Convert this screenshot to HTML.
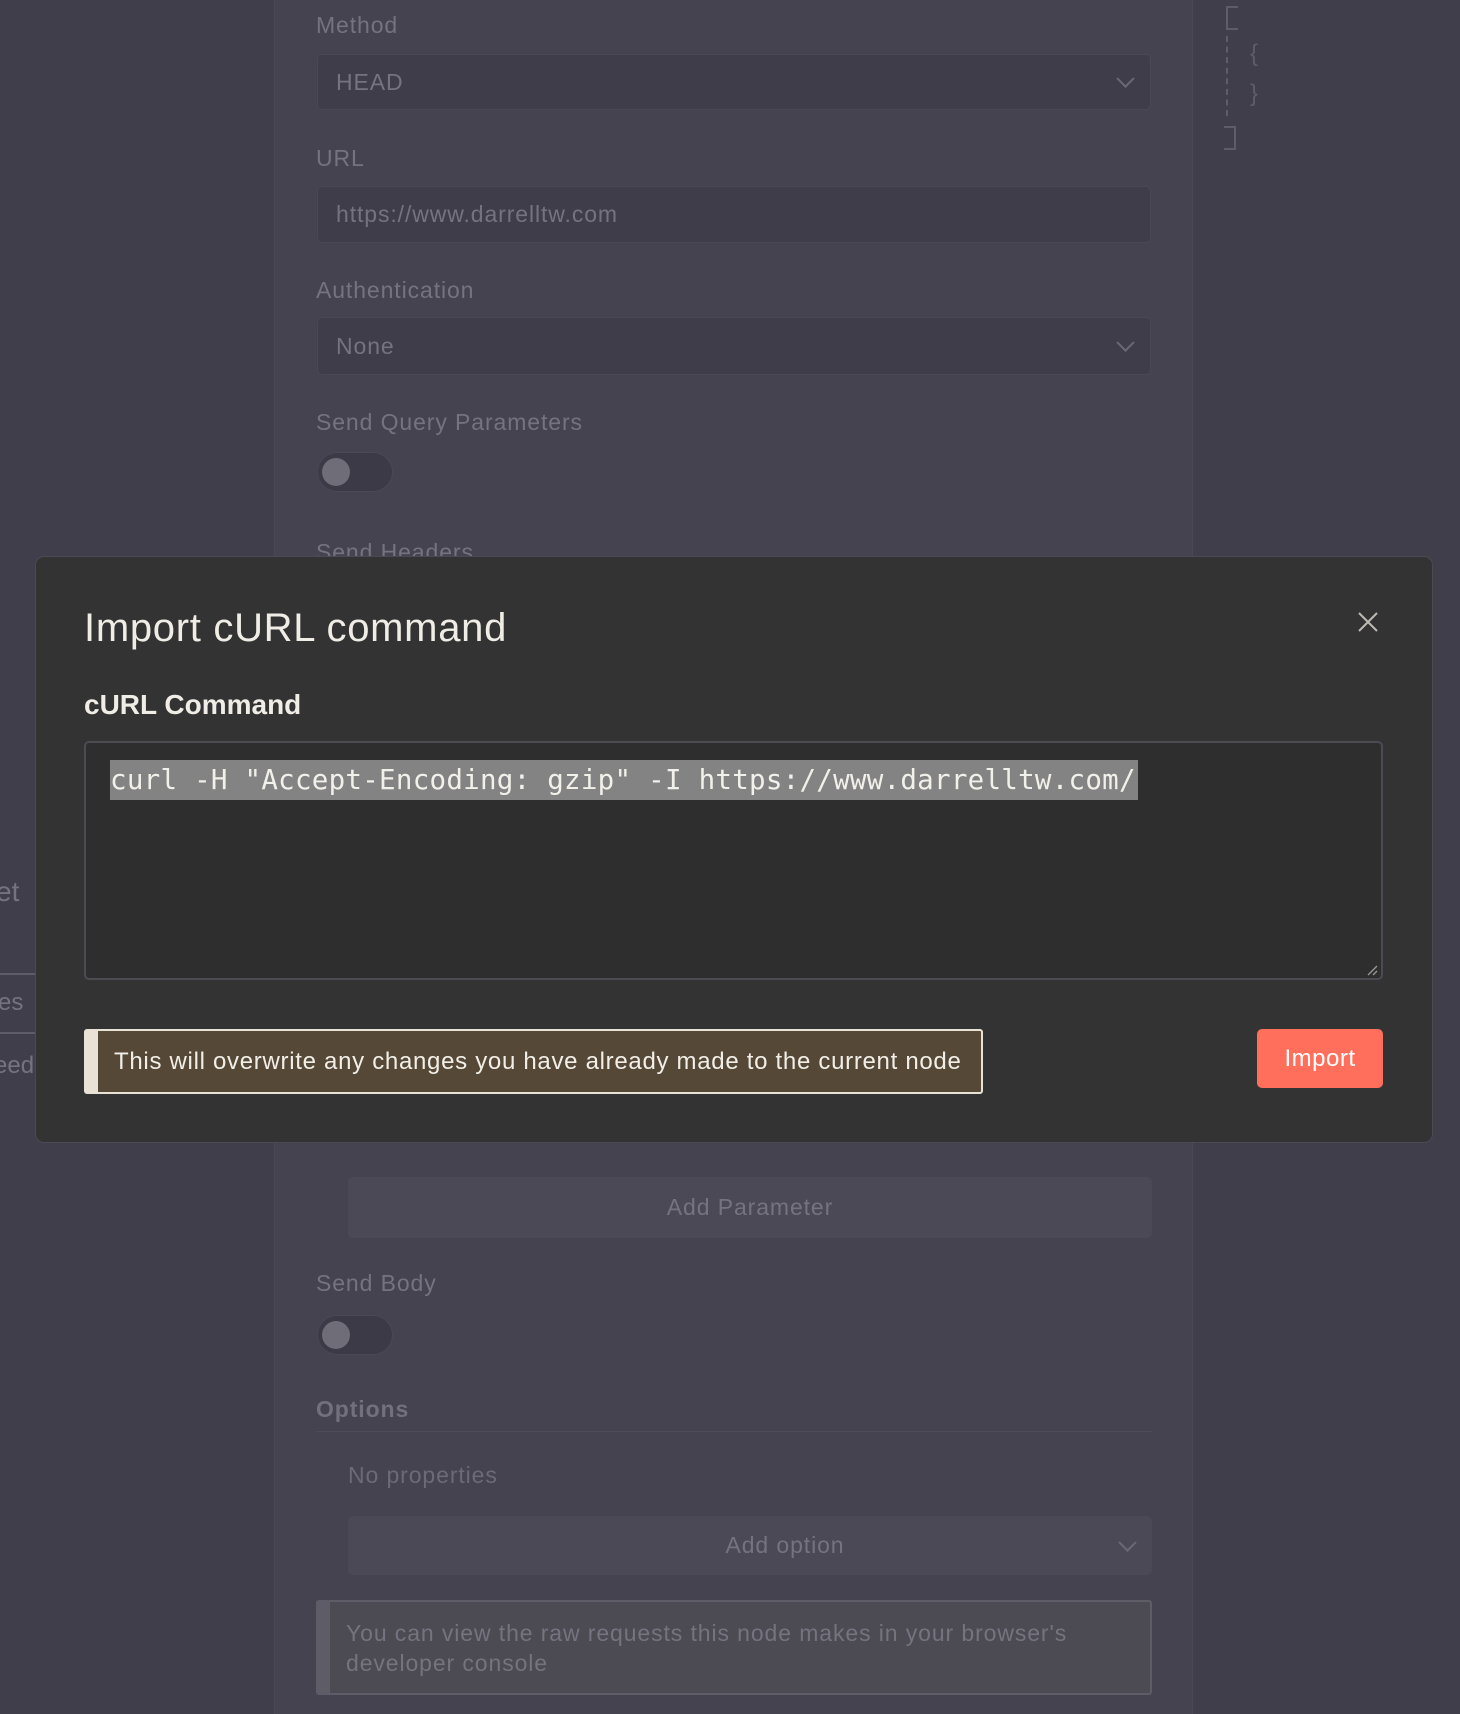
<!DOCTYPE html>
<html><head><meta charset="utf-8"><style>
*{box-sizing:border-box;margin:0;padding:0}
body{width:1460px;height:1714px;background:#403e4b;font-family:"Liberation Sans",sans-serif;position:relative;overflow:hidden}
.a{position:absolute}
.panel{left:274px;top:0;width:919px;height:1714px;background:#45434f;border-left:1px solid #4a4856;border-right:1px solid #4a4856}
.lbl{position:absolute;left:316px;color:#75737f;font-size:23px;letter-spacing:0.9px}
.box{position:absolute;left:317px;width:834px;background:#3f3d49;border:1px solid #4a4856;border-radius:5px;color:#75737f;font-size:23px;letter-spacing:0.9px;padding-left:18px;display:flex;align-items:center}
.chev{position:absolute;right:18px;top:50%;width:13px;height:13px;border-right:2px solid #6a6874;border-bottom:2px solid #6a6874;transform:translateY(-75%) rotate(45deg)}
.tog{position:absolute;left:317px;width:76px;height:40px;border-radius:20px;background:#3c3a46;border:1px solid #4a4856}
.tog::after{content:"";position:absolute;left:4px;top:5px;width:28px;height:28px;border-radius:50%;background:#6f6d78}
</style></head><body>
<div class="a panel"></div>
<div class="lbl" style="top:12px">Method</div>
<div class="box" style="top:54px;height:56px">HEAD<span class="chev"></span></div>
<div class="lbl" style="top:145px">URL</div>
<div class="box" style="top:186px;height:57px">https://www.darrelltw.com</div>
<div class="lbl" style="top:277px">Authentication</div>
<div class="box" style="top:317px;height:58px">None<span class="chev"></span></div>
<div class="lbl" style="top:409px">Send Query Parameters</div>
<div class="tog" style="top:452px"></div>
<div class="lbl" style="top:539px">Send Headers</div>

<div class="a" style="left:1226px;top:6px;width:12px;height:24px;border:2px solid #5e5c68;border-right:none"></div>
<div class="a" style="left:1226px;top:36px;height:80px;border-left:2px dashed #5e5c68"></div>
<div class="a" style="left:1250px;top:40px;color:#5e5c68;font-size:24px">{</div>
<div class="a" style="left:1250px;top:80px;color:#5e5c68;font-size:24px">}</div>
<div class="a" style="left:1224px;top:126px;width:12px;height:24px;border:2px solid #5e5c68;border-left:none"></div>

<div class="a" style="left:-4px;top:876px;color:#75737f;font-size:28px">et</div>
<div class="a" style="left:0;top:973px;width:35px;height:2px;background:#5e5c68"></div>
<div class="a" style="left:-2px;top:989px;color:#75737f;font-size:24px">es</div>
<div class="a" style="left:0;top:1032px;width:35px;height:2px;background:#5e5c68"></div>
<div class="a" style="left:-6px;top:1052px;color:#75737f;font-size:24px">eed</div>

<div class="a" style="left:348px;top:1177px;width:804px;height:61px;background:#4b4955;border-radius:5px;color:#75737f;font-size:23px;letter-spacing:0.9px;display:flex;align-items:center;justify-content:center">Add Parameter</div>
<div class="lbl" style="top:1270px">Send Body</div>
<div class="tog" style="top:1315px"></div>
<div class="lbl" style="top:1396px;font-weight:600;color:#72707c">Options</div>
<div class="a" style="left:316px;top:1431px;width:836px;height:1px;background:#4e4c58"></div>
<div class="a" style="left:348px;top:1462px;color:#6c6a76;font-size:23px;letter-spacing:0.9px">No properties</div>
<div class="a" style="left:348px;top:1516px;width:804px;height:59px;background:#4b4955;border-radius:5px;color:#75737f;font-size:23px;letter-spacing:0.9px;display:flex;align-items:center;justify-content:center;padding-left:70px">Add option<span class="chev"></span></div>
<div class="a" style="left:316px;top:1600px;width:836px;height:95px;background:#4c4a52;border:2px solid #5e5c66;border-left:14px solid #5e5c66;border-radius:3px;color:#75737f;font-size:23px;letter-spacing:0.9px;padding:16px 0 0 16px;line-height:30px">You can view the raw requests this node makes in your browser's<br>developer console</div>

<div class="a" style="left:35px;top:556px;width:1398px;height:587px;background:#333333;border:1px solid #4a4a52;border-radius:9px"></div>
<div class="a" style="left:84px;top:606px;color:#f0ede6;font-size:40px;letter-spacing:0.7px">Import cURL command</div>
<svg class="a" style="left:1357px;top:611px" width="22" height="22" viewBox="0 0 22 22"><path d="M2 2L20 20M20 2L2 20" stroke="#bdbab4" stroke-width="2"/></svg>
<div class="a" style="left:84px;top:689px;color:#f0ede6;font-size:28px;font-weight:600">cURL Command</div>
<div class="a" style="left:84px;top:741px;width:1299px;height:239px;background:#2e2e2e;border:2px solid #4b4b52;border-radius:5px"></div>
<div class="a" style="left:110px;top:760px;height:40px;background:#838383;color:#f2f0ea;font-family:'DejaVu Sans Mono','Liberation Mono',monospace;font-size:27.5px;letter-spacing:0.26px;line-height:40px;white-space:pre;padding-right:2px">curl -H "Accept-Encoding: gzip" -I https://www.darrelltw.com/</div>
<svg class="a" style="left:1366px;top:964px" width="12" height="12"><path d="M2 11L11 2M7 11L11 7" stroke="#999" stroke-width="1.3"/></svg>
<div class="a" style="left:84px;top:1029px;width:899px;height:65px;background:#554837;border:2px solid #e8e3d6;border-left:14px solid #e8e3d6;border-radius:3px;color:#f2efe8;font-size:24px;letter-spacing:0.7px;display:flex;align-items:center;padding-left:16px;white-space:nowrap">This will overwrite any changes you have already made to the current node</div>
<div class="a" style="left:1257px;top:1029px;width:126px;height:59px;background:#ff6f5c;border-radius:5px;color:#fff;font-size:24px;letter-spacing:0.5px;display:flex;align-items:center;justify-content:center">Import</div>
</body></html>
